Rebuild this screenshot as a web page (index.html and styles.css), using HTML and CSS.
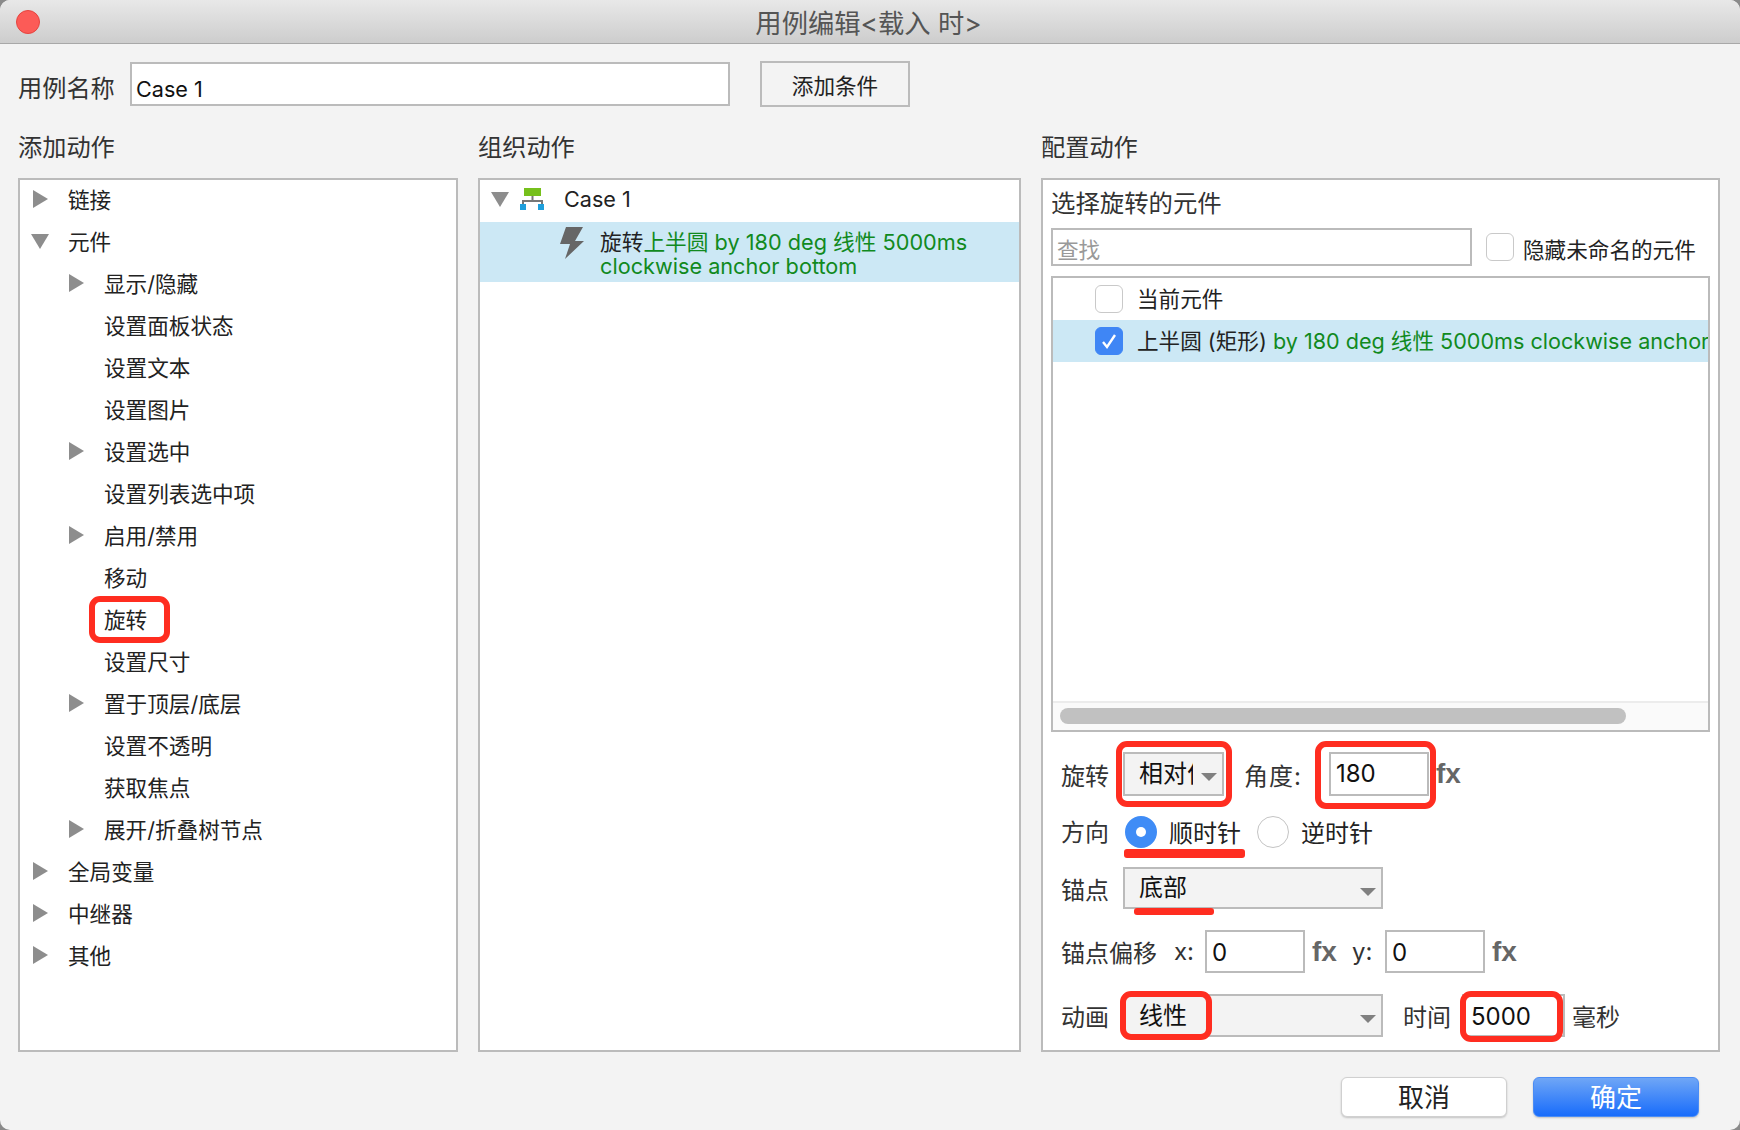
FILE: index.html
```html
<!DOCTYPE html>
<html lang="zh-CN">
<head>
    <meta charset="UTF-8">
    <meta name="viewport" content="width=device-width, initial-scale=1.0">
    <title>用例编辑</title>
    <link rel="stylesheet" href="styles.css">
</head>
<body>
    <div class="window">
        <div class="titlebar">
            <span class="close-dot"></span>
            <span class="title">用例编辑&lt;载入 时&gt;</span>
        </div>

        <div class="name-row">
            <span class="name-label">用例名称</span>
            <div class="field name-input">Case 1</div>
            <div class="add-btn">添加条件</div>
        </div>

        <div class="columns">
            <!-- left: action tree -->
            <section class="col">
                <h2>添加动作</h2>
                <div class="panel tree">
                    <div class="node"><i class="tri tri-right"></i>链接</div>
                    <div class="node"><i class="tri tri-down"></i>元件</div>
                    <div class="node sub"><i class="tri tri-right"></i>显示/隐藏</div>
                    <div class="node sub">设置面板状态</div>
                    <div class="node sub">设置文本</div>
                    <div class="node sub">设置图片</div>
                    <div class="node sub"><i class="tri tri-right"></i>设置选中</div>
                    <div class="node sub">设置列表选中项</div>
                    <div class="node sub"><i class="tri tri-right"></i>启用/禁用</div>
                    <div class="node sub">移动</div>
                    <div class="node sub"><span class="marked">旋转<b class="mark mark-rotate"></b></span></div>
                    <div class="node sub">设置尺寸</div>
                    <div class="node sub"><i class="tri tri-right"></i>置于顶层/底层</div>
                    <div class="node sub">设置不透明</div>
                    <div class="node sub">获取焦点</div>
                    <div class="node sub"><i class="tri tri-right"></i>展开/折叠树节点</div>
                    <div class="node"><i class="tri tri-right"></i>全局变量</div>
                    <div class="node"><i class="tri tri-right"></i>中继器</div>
                    <div class="node"><i class="tri tri-right"></i>其他</div>
                </div>
            </section>

            <!-- middle: case actions -->
            <section class="col">
                <h2>组织动作</h2>
                <div class="panel">
                    <div class="case-row">
                        <i class="tri tri-down"></i>
                        <svg class="case-icon" width="25" height="22" viewBox="0 0 25 22">
                            <rect x="4" y="0" width="17" height="8" fill="#76c01c"/>
                            <path d="M12.5 8V12M3 18V13H22V18" fill="none" stroke="#777" stroke-width="2"/>
                            <rect x="0" y="16" width="6" height="6" fill="#1f9fdc"/>
                            <rect x="18" y="16" width="6" height="6" fill="#1f9fdc"/>
                        </svg>
                        <span>Case 1</span>
                    </div>
                    <div class="action-row">
                        <svg class="bolt" width="24" height="32" viewBox="0 0 24 32">
                            <path d="M6 0H23L15 14H24L5 32L10 17H0Z" fill="#666"/>
                        </svg>
                        <div class="action-text">旋转<em>上半圆 by 180 deg 线性 5000ms<br>clockwise anchor bottom</em></div>
                    </div>
                </div>
            </section>

            <!-- right: configure -->
            <section class="col">
                <h2>配置动作</h2>
                <div class="panel config">
                    <div class="config-title">选择旋转的元件</div>
                    <div class="search-row">
                        <div class="field search">查找</div>
                        <span class="check"></span>
                        <span class="hide-label">隐藏未命名的元件</span>
                    </div>
                    <div class="list">
                        <div class="list-body">
                            <div class="list-row"><span class="check"></span><span class="row-text">当前元件</span></div>
                            <div class="list-row selected">
                                <span class="check checked">
                                    <svg width="18" height="18" viewBox="0 0 18 18"><path d="M3 10L7 15L15 3" fill="none" stroke="#fff" stroke-width="2.4"/></svg>
                                </span>
                                <span class="row-text">上半圆 (矩形) <em>by 180 deg 线性 5000ms clockwise anchor bottom</em></span>
                            </div>
                        </div>
                        <div class="scrollbar"><span class="thumb"></span></div>
                    </div>

                    <div class="form-row row-rotate">
                        <span class="label">旋转</span>
                        <div class="select select-rotate"><span class="select-text">相对位置</span><i class="caret"></i><b class="mark mark-select"></b></div>
                        <span class="label angle-label">角度:</span>
                        <div class="field num angle">180<b class="mark mark-angle"></b></div>
                        <span class="fx">fx</span>
                    </div>
                    <div class="form-row row-dir">
                        <span class="label">方向</span>
                        <span class="radio on"></span>
                        <span class="radio-text">顺时针<b class="line line-dir"></b></span>
                        <span class="radio"></span>
                        <span class="radio-text">逆时针</span>
                    </div>
                    <div class="form-row row-anchor">
                        <span class="label">锚点</span>
                        <div class="select select-wide"><span class="select-text">底部</span><i class="caret"></i><b class="line line-anchor"></b></div>
                    </div>
                    <div class="form-row row-offset">
                        <span class="label offset-label">锚点偏移</span>
                        <span class="axis axis-x">x:</span>
                        <div class="field num offset">0</div>
                        <span class="fx">fx</span>
                        <span class="axis axis-y">y:</span>
                        <div class="field num offset">0</div>
                        <span class="fx">fx</span>
                    </div>
                    <div class="form-row row-anim">
                        <span class="label">动画</span>
                        <div class="select select-wide"><span class="select-text">线性</span><i class="caret"></i><b class="mark mark-anim"></b></div>
                        <span class="label time-label">时间</span>
                        <div class="field num time">5000<b class="mark mark-time"></b></div>
                        <span class="label ms-label">毫秒</span>
                    </div>
                </div>
            </section>
        </div>

        <div class="footer">
            <div class="btn">取消</div>
            <div class="btn primary">确定</div>
        </div>
    </div>
</body>
</html>
```

FILE: styles.css
```css
* {
    box-sizing: border-box;
}

body {
    margin: 0;
    background-color: #8a8a8a;
    font-family: Inter, "Noto Sans CJK SC", sans-serif;
    font-size: 21.6px;
    color: #222;
}

em {
    font-style: normal;
    color: #118a1e;
}

.window {
    width: 1740px;
    height: 1130px;
    background-color: #f3f3f3;
    border-radius: 10px;
    overflow: hidden;
}

.titlebar {
    position: relative;
    height: 44px;
    background: linear-gradient(#e8e8e8, #cdcdcd);
    border-bottom: 1px solid #a8a8a8;
    display: flex;
    align-items: center;
    justify-content: center;
}

.close-dot {
    position: absolute;
    left: 16px;
    top: 10px;
    width: 24px;
    height: 24px;
    border-radius: 50%;
    background-color: #fc5b57;
    border: 1px solid #e5443f;
}

.title {
    font-size: 26.3px;
    color: #555;
    margin-left: -3px;
}

.name-row {
    display: flex;
    align-items: center;
    height: 46px;
    margin-top: 17px;
    padding-left: 18px;
}

.name-label {
    width: 112px;
    font-size: 24.2px;
    color: #333;
    padding-top: 4px;
}

.field {
    position: relative;
    background-color: white;
    border: 2px solid #bbb;
    color: #111;
}

.name-input {
    width: 600px;
    height: 44px;
    padding: 9px 4px 0;
    line-height: 32px;
}

.add-btn {
    width: 150px;
    height: 46px;
    margin-left: 30px;
    border: 2px solid #bbb;
    text-align: center;
    line-height: 46px;
    color: #222;
}

.columns {
    display: grid;
    grid-template-columns: 440px 543px 679px;
    column-gap: 20px;
    padding-left: 18px;
    margin-top: 21px;
}

h2 {
    margin: 0;
    height: 50px;
    font-size: 24.2px;
    line-height: 40px;
    font-weight: 400;
    color: #333;
}

.panel {
    height: 874px;
    background-color: white;
    border: 2px solid #bbb;
}

.node {
    position: relative;
    height: 42px;
    line-height: 40px;
    padding-left: 48px;
}

.node.sub {
    padding-left: 84px;
    color: #222;
}

.tri {
    position: absolute;
    width: 0;
    height: 0;
}

.tri-right {
    left: 13px;
    top: 10px;
    border-left: 15px solid #8d8d8d;
    border-top: 9px solid transparent;
    border-bottom: 9px solid transparent;
}

.tri-down {
    left: 11px;
    top: 12px;
    border-top: 15px solid #8d8d8d;
    border-left: 9px solid transparent;
    border-right: 9px solid transparent;
}

.sub .tri-right {
    left: 49px;
}

.marked {
    position: relative;
    display: inline-block;
}

/* red annotations drawn over the dialog */
.mark {
    position: absolute;
    border: 6px solid #ff2d20;
    border-radius: 11px;
}

.line {
    position: absolute;
    height: 8px;
    background-color: #ff2d20;
    border-radius: 3px;
}

.mark-rotate {
    left: -15px;
    top: -4px;
    width: 81px;
    height: 47px;
}

.case-row {
    position: relative;
    display: flex;
    align-items: center;
    height: 42px;
    padding: 0 0 4px 84px;
}

.case-row .tri-down {
    left: 11px;
    top: 12px;
}

.case-icon {
    position: absolute;
    left: 40px;
    top: 8px;
}

.action-row {
    position: relative;
    height: 60px;
    background-color: #cce8f5;
    padding: 8px 0 0 120px;
    font-size: 21.7px;
}

.bolt {
    position: absolute;
    left: 80px;
    top: 5px;
}

.action-text {
    line-height: 24px;
}

.config {
    padding: 0 8px;
}

.config-title {
    height: 48px;
    line-height: 47px;
    font-size: 24.4px;
    color: #333;
}

.search-row {
    display: flex;
    align-items: center;
    height: 38px;
    color: #222;
}

.search {
    width: 421px;
    height: 38px;
    margin-right: 14px;
    padding-left: 4px;
    line-height: 40px;
    color: #999;
}

.hide-label {
    padding-top: 2px;
}

.check {
    display: inline-flex;
    align-items: center;
    justify-content: center;
    flex: none;
    width: 28px;
    height: 28px;
    margin-right: 9px;
    background-color: white;
    border: 1px solid #c9c9c9;
    border-radius: 6px;
}

.check.checked {
    background-color: #3f86f5;
    border-color: #3f86f5;
}

.list {
    width: 659px;
    height: 456px;
    margin-top: 10px;
    border: 2px solid #bbb;
    background-color: white;
    display: flex;
    flex-direction: column;
}

.list-body {
    flex: 1;
    overflow: hidden;
}

.list-row {
    display: flex;
    align-items: center;
    height: 42px;
    padding-left: 42px;
    white-space: nowrap;
}

.row-text {
    margin-top: -4px;
    white-space: nowrap;
}

.list-row .check {
    margin-right: 14px;
}

.list-row.selected {
    background-color: #cce8f5;
}

.scrollbar {
    height: 29px;
    background-color: #fafafa;
    border-top: 2px solid #ececec;
    padding: 5px 0 0 7px;
}

.thumb {
    display: block;
    width: 566px;
    height: 16px;
    background-color: #c1c1c1;
    border-radius: 8px;
}

.form-row {
    display: flex;
    align-items: center;
    padding-left: 10px;
}

.row-rotate {
    height: 44px;
    margin-top: 20px;
}

.row-dir {
    height: 32px;
    margin-top: 20px;
}

.row-dir .label {
    margin-top: -3px;
}

.row-anchor {
    height: 42px;
    margin-top: 19px;
}

.row-offset {
    height: 43px;
    margin-top: 21px;
}

.row-anim {
    height: 43px;
    margin-top: 21px;
}

.label {
    width: 62px;
    flex: none;
    font-size: 24px;
    color: #333;
}

.select {
    position: relative;
    height: 100%;
    background-color: #f3f3f3;
    border: 2px solid #bbb;
    display: flex;
    align-items: center;
    color: #111;
    font-size: 24px;
}

.select-text {
    display: block;
    overflow: hidden;
    white-space: nowrap;
    margin-top: -5px;
    padding-left: 14px;
}

.select-rotate {
    width: 101px;
}

.select-rotate .select-text {
    width: 68px;
}

.select-wide {
    width: 260px;
}

.caret {
    position: absolute;
    right: 5px;
    top: 19px;
    width: 0;
    height: 0;
    border-top: 8px solid #808080;
    border-left: 8px solid transparent;
    border-right: 8px solid transparent;
}

.mark-select {
    left: -9px;
    top: -13px;
    width: 116px;
    height: 66px;
}

.angle-label {
    width: 85px;
    margin-left: 20px;
    letter-spacing: 1px;
}

.num {
    height: 100%;
    padding-left: 5px;
    font-size: 24px;
    line-height: 40px;
}

.angle {
    width: 100px;
}

.offset {
    width: 100px;
    line-height: 41px;
}

.mark-angle {
    left: -16px;
    top: -13px;
    width: 121px;
    height: 68px;
}

.fx {
    margin-left: 7px;
    font-size: 28px;
    font-weight: 700;
    color: #666;
    font-family: "Liberation Sans", sans-serif;
}

.radio {
    flex: none;
    width: 32px;
    height: 32px;
    border-radius: 50%;
    background-color: white;
    border: 1px solid #c4c4c4;
}

.radio.on {
    margin-left: 2px;
    background-color: #3f8cf6;
    border: 11px solid #3f8cf6;
    position: relative;
}

.radio.on::after {
    content: "";
    display: block;
    width: 10px;
    height: 10px;
    border-radius: 50%;
    background-color: white;
}

.radio-text {
    position: relative;
    font-size: 24px;
    margin-left: 12px;
    margin-right: 16px;
    margin-top: -1px;
}

.line-dir {
    left: -45px;
    top: 35px;
    width: 121px;
    height: 9px;
}

.line-anchor {
    left: 9px;
    top: 39px;
    width: 80px;
    height: 7px;
}

.offset-label {
    width: 113px;
}

.axis {
    width: 31px;
    flex: none;
    font-size: 24px;
    color: #333;
}

.axis-y {
    margin-left: 15px;
    width: 33px;
}

.mark-anim {
    left: -5px;
    top: -5px;
    width: 92px;
    height: 49px;
}

.time-label {
    width: 59px;
    margin-left: 20px;
}

.time {
    width: 103px;
    padding-left: 7px;
    line-height: 42px;
}

.mark-time {
    left: -4px;
    top: -5px;
    width: 103px;
    height: 51px;
}

.ms-label {
    width: 60px;
    margin-left: 7px;
}

.footer {
    display: flex;
    justify-content: flex-end;
    gap: 26px;
    padding-right: 41px;
    margin-top: 25px;
}

.btn {
    width: 166px;
    height: 40px;
    background-color: white;
    border: 1px solid #d0d0d0;
    border-radius: 6px;
    box-shadow: 0 1px 2px rgba(0, 0, 0, 0.2);
    text-align: center;
    line-height: 40px;
    font-size: 26px;
    color: #222;
}

.btn.primary {
    background: linear-gradient(#6fa6f6, #186cfb);
    border-color: #4a8cf5;
    color: white;
}
```
